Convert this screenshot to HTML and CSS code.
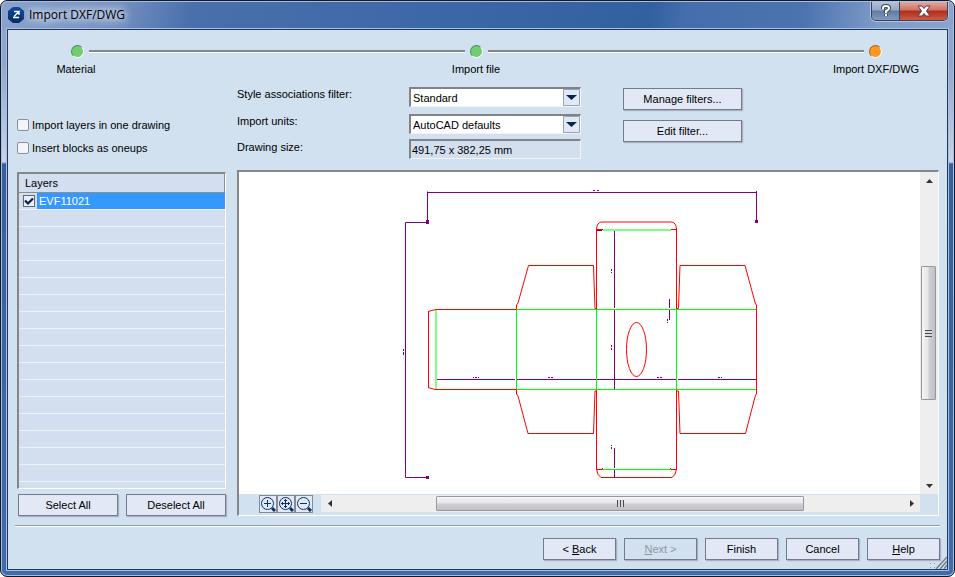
FILE: index.html
```html
<!DOCTYPE html>
<html lang="en">
  <head>
    <meta charset="UTF-8" />
    <meta name="viewport" content="width=device-width, initial-scale=1.0" />
    <title>Import DXF/DWG</title>
    <link rel="stylesheet" href="styles.css">
  </head>
  <body>
    <div class="window">
      <header class="titlebar">
        <svg class="app-icon" viewBox="0 0 16 16" width="16" height="16">
          <defs>
            <linearGradient id="icon-fill" x1="0" y1="0" x2="0" y2="1">
              <stop offset="0" stop-color="#0a4aa0" />
              <stop offset="1" stop-color="#052a66" />
            </linearGradient>
          </defs>
          <path d="M5 0h6l5 4v8l-5 4H5l-5-4V4z" fill="url(#icon-fill)" />
          <path d="M6 4.500h5L6 9.500M11 4v4M5 10.500h6" fill="none" stroke="#fff" stroke-width="1.300" />
        </svg>
        <h1>Import DXF/DWG</h1>
        <div class="window-controls">
          <button type="button" class="help-btn" aria-label="Help">
            <svg viewBox="0 0 12 14" width="12" height="14">
              <path d="M3 5V4q0-2 3-2t3 2q0 2-3 3v2M6 10v2" fill="none" stroke="#3c4656" stroke-width="4" />
              <path d="M3 5V4q0-2 3-2t3 2q0 2-3 3v2M6 10v2" fill="none" stroke="#fff" stroke-width="2" />
            </svg>
          </button>
          <button type="button" class="close-btn" aria-label="Close">
            <svg viewBox="0 0 14 12" width="14" height="12">
              <path d="M1 1h4l2 2.500L9 1h4L9.500 6l3.500 5H9L7 8.500 5 11H1l3.500-5z" fill="#fff" stroke="#5b3a42" />
            </svg>
          </button>
        </div>
      </header>

      <main class="client">
        <section class="wizard-steps">
          <div class="step-track">
            <span class="dot done"></span>
            <span class="line"></span>
            <span class="dot done"></span>
            <span class="line"></span>
            <span class="dot current"></span>
          </div>
          <ol class="step-labels">
            <li>Material</li>
            <li>Import file</li>
            <li>Import DXF/DWG</li>
          </ol>
        </section>

        <div class="content">
          <div class="options">
            <label><input type="checkbox" />Import layers in one drawing</label>
            <label><input type="checkbox" />Insert blocks as oneups</label>
          </div>

          <form class="settings">
            <div class="fields">
              <label for="style-filter">Style associations filter:</label>
              <select id="style-filter">
                <option>Standard</option>
              </select>
              <label for="units">Import units:</label>
              <select id="units">
                <option>AutoCAD defaults</option>
              </select>
              <label for="size">Drawing size:</label>
              <input type="text" id="size" value="491,75 x 382,25 mm" readonly />
            </div>
            <div class="filter-buttons">
              <button type="button" class="btn">Manage filters...</button>
              <button type="button" class="btn">Edit filter...</button>
            </div>
          </form>

          <section class="layers">
            <div class="layer-list">
              <table>
                <thead>
                  <tr><th colspan="2">Layers</th></tr>
                </thead>
                <tbody>
                  <tr>
                    <td class="check"><input type="checkbox" id="layer-1" checked /></td>
                    <td class="name"><label for="layer-1">EVF11021</label></td>
                  </tr>
                </tbody>
              </table>
            </div>
            <div class="layer-buttons">
              <button type="button" class="btn">Select All</button>
              <button type="button" class="btn">Deselect All</button>
            </div>
          </section>

          <section class="preview">
            <div class="canvas">
              <svg viewBox="239 172 681 322" fill="none">
                <!-- dimension lines -->
                <g stroke="#800080">
                  <path d="M427.500 221V191.500M427 192.500H756.500M756.500 191V221" />
                  <path d="M428 222.500H405.500V477.500H428" />
                  <path d="M614.500 231V308M614.500 310V389M614.500 448V468M614.500 470V477" />
                  <path d="M437 379.500H515M517 379.500H676M678 379.500H756" />
                  <path d="M669.500 299V308M669.500 310V320" />
                  <path d="M593 190.500h2m2 0h2M473 377.500h1m1 0h2m1 0h1M548 377.500h2m1 0h2M657 377.500h2m1 0h2M718 377.500h2m1 0h1" />
                  <path d="M611.500 269v2m0 1v1M611.500 345v2m0 1v2M403.500 349v2m0 1v3M667.500 319v2m0 1v1M611.500 445v1m0 1v2" />
                </g>
                <g fill="#800080">
                  <rect x="426" y="220" width="3" height="4" />
                  <rect x="755" y="220" width="3" height="3" />
                  <rect x="426" y="476" width="3" height="3" />
                </g>
                <!-- cut lines -->
                <g stroke="#ff0000">
                  <path d="M516.500 309.500H436L428 311.500" />
                  <path d="M428 387.500L435 389.500H516.500" />
                  <path d="M428.500 311V388" />
                  <path d="M516.500 309.500V305L518 303L528.500 265.500H593.500L595 308.500H596.500" />
                  <path d="M516.500 389.500V394L518 396L528 433.500H593.500L595 391H596.500" />
                  <path d="M596.500 309V229Q597 223 601 222H672Q676 223 676.500 229V309" />
                  <path d="M596.500 390V469Q597 475 601 477.500H672Q676 475 676.500 469V390" />
                  <path d="M596.500 229.500H603M671 229.500H676M596.500 469.500H602.500V468M676.500 469.500H670.500V468" />
                  <path d="M676.500 308.500H678.500L680 265.500H745L755.500 304L756.500 305V394L755.500 395L745.500 433.500H680L678.500 391H676.500" />
                  <ellipse cx="636.500" cy="349.500" rx="10" ry="27" />
                </g>
                <!-- crease lines -->
                <g stroke="#00ff00">
                  <path d="M517 309.500H756M517 389.500H756" />
                  <path d="M596.500 310V390M676.500 310V390" />
                  <path d="M603 469.500H671" />
                  <path d="M516.500 310V389" />
                </g>
                <g stroke="#80ff80">
                  <path d="M436 310V389" stroke-width="2" />
                  <path d="M603 230H671" stroke-width="2" />
                </g>
                <path d="M597 230.500H602" stroke="#800040" />
              </svg>
            </div>

            <div class="scrollbar vertical">
              <button type="button" aria-label="Scroll up"><svg viewBox="0 0 7 4" width="7" height="4"><path d="M3.500 0L7 4H0z" /></svg></button>
              <div class="track"><div class="thumb"><i class="grip"></i></div></div>
              <button type="button" aria-label="Scroll down"><svg viewBox="0 0 7 4" width="7" height="4"><path d="M0 0h7L3.500 4z" /></svg></button>
            </div>

            <div class="preview-bar">
              <div class="zoom-tools">
                <button type="button" aria-label="Zoom in">
                  <svg viewBox="0 0 16 16" width="16" height="16">
                    <circle cx="7.500" cy="7.500" r="6" /><path d="M4 7.500h7M7.500 4v7" /><path class="handle" d="M12 12l3 3" />
                  </svg>
                </button>
                <button type="button" aria-label="Zoom to fit">
                  <svg viewBox="0 0 16 16" width="16" height="16">
                    <circle cx="7.500" cy="7.500" r="6" /><path d="M3 7.500h9M7.500 3v9M4.500 6v3M10.500 6v3M6 4.500h3M6 10.500h3" /><path class="handle" d="M12 12l3 3" />
                  </svg>
                </button>
                <button type="button" aria-label="Zoom out">
                  <svg viewBox="0 0 16 16" width="16" height="16">
                    <circle cx="7.500" cy="7.500" r="6" /><path d="M4 7.500h7" /><path class="handle" d="M12 12l3 3" />
                  </svg>
                </button>
              </div>
              <div class="scrollbar horizontal">
                <button type="button" aria-label="Scroll left"><svg viewBox="0 0 4 7" width="4" height="7"><path d="M4 0v7L0 3.500z" /></svg></button>
                <div class="track"><div class="thumb"><i class="grip"></i></div></div>
                <button type="button" aria-label="Scroll right"><svg viewBox="0 0 4 7" width="4" height="7"><path d="M0 0v7l4-3.500z" /></svg></button>
              </div>
            </div>
          </section>
        </div>

        <footer class="actions">
          <button type="button" class="btn">&lt; <u>B</u>ack</button>
          <button type="button" class="btn" disabled><u>N</u>ext &gt;</button>
          <button type="button" class="btn">Finish</button>
          <button type="button" class="btn">Cancel</button>
          <button type="button" class="btn"><u>H</u>elp</button>
        </footer>
        <svg class="resize-grip" viewBox="0 0 18 16" width="18" height="16">
          <path d="M7 16L18 4M11 16l7-8M15 16l3-4" stroke="#6f7f90" stroke-width="1.500" />
          <path d="M1 10.500h1m3 0h1M1 14.500h1m3 0h1" stroke="#8a99aa" />
        </svg>
      </main>
    </div>
  </body>
</html>
```
FILE: styles.css
```css
* {
  margin: 0;
  padding: 0;
  box-sizing: border-box;
}

body {
  font-family: "Liberation Sans", Arial, sans-serif;
  font-size: 11px;
  line-height: 14px;
  color: #000;
  background-color: #fff;
}

button,
input,
select {
  font: inherit;
  color: inherit;
}

/* window frame */
.window {
  display: flex;
  flex-direction: column;
  min-height: 100vh;
  padding: 0 6px 6px;
  border: 1px solid #10182c;
  border-radius: 7px;
  background: linear-gradient(#8ea5cd 0, #8ea5cd 60px, #c9d4e8 161px, #365f9e 163px, #3f6cad 100%);
  box-shadow: inset 0 0 0 1px #a9bddd;
}

.titlebar {
  display: flex;
  align-items: center;
  height: 28px;
  margin: 0 -5px;
  padding: 0 5px 2px 6px;
  border-top: 1px solid #a9bddd;
  border-radius: 6px 6px 0 0;
  background: linear-gradient(100deg, #8ba3cc 0, #7591c1 12%, #4970ac 20%, #3d68a7 45%, #33609f 68%, #456fac 72%, #4a73af 84%, #7f9ac8 92%, #8ba4cf 100%);
}

.titlebar h1 {
  flex: 1;
  padding-left: 5px;
  font-family: "Open Sans", sans-serif;
  font-size: 12px;
  font-weight: normal;
  line-height: 18px;
  text-shadow: 0 0 6px #dfe8f6, 0 0 8px #dfe8f6, 0 0 12px #dfe8f6;
}

.window-controls {
  display: flex;
  align-self: flex-start;
  height: 19px;
  border: 1px solid #39425a;
  border-top: none;
  border-radius: 0 0 5px 5px;
  overflow: hidden;
  box-shadow: 0 0 0 1px #b3c4e0;
}

.window-controls button {
  display: flex;
  align-items: center;
  justify-content: center;
  border: none;
}

.window-controls .help-btn {
  width: 28px;
  border-right: 1px solid #39425a;
  background: linear-gradient(#b4c2da, #93a7c8 45%, #60799f 50%, #829ac0);
}

.window-controls .close-btn {
  width: 47px;
  background: linear-gradient(#e2aba2, #cf7263 45%, #b02c1b 50%, #cb5c46);
}

.client {
  position: relative;
  display: flex;
  flex: 1;
  flex-direction: column;
  border: 1px solid #22375a;
  background-color: #d1e1ef;
  box-shadow: 0 0 0 1px #a8c0e0;
}

/* wizard progress */
.step-track {
  display: flex;
  align-items: center;
  gap: 5px;
  padding: 15px 65px 0 63px;
}

.dot {
  width: 13px;
  height: 13px;
  border: 1px solid #58866a;
  border-right-color: #fff;
  border-bottom-color: #fff;
  border-radius: 50%;
}

.done {
  background-color: #6fce70;
}

.current {
  border-color: #9b6a32 #fff #fff #9b6a32;
  background-color: #ff981f;
}

.line {
  flex: 1;
  height: 3px;
  border-top: 2px solid #83878d;
  border-bottom: 1px solid #fff;
}

.step-labels {
  display: flex;
  justify-content: space-between;
  padding: 4px 21px 0 18px;
  list-style: none;
}

.step-labels li {
  width: 100px;
  text-align: center;
}

/* main grid */
.content {
  display: grid;
  flex: 1;
  grid-template-columns: 210px 1fr;
  grid-template-rows: 83px 1fr;
  column-gap: 10px;
  margin-top: 11px;
  padding: 0 8px 0 9px;
}

.options {
  display: flex;
  flex-direction: column;
  gap: 9px;
  padding-top: 31px;
}

.options label {
  display: flex;
  align-items: center;
  gap: 3px;
}

input[type="checkbox"] {
  width: 12px;
  height: 12px;
  border: 1px solid #8a919c;
  border-radius: 2px;
  background-color: #f4f5f8;
  appearance: none;
}

.settings {
  display: flex;
  align-items: flex-start;
  gap: 42px;
}

.fields {
  display: grid;
  grid-template-columns: 172px 172px;
  grid-template-rows: 20px 19px 20px;
  row-gap: 7px;
}

.fields select,
.fields input {
  width: 100%;
  height: 20px;
  border: 2px solid;
  border-color: #808285 #f2f4f6 #f2f4f6 #808285;
  border-right-width: 1px;
  border-bottom-width: 1px;
  border-radius: 0;
  outline: none;
}

.fields select {
  padding-left: 2px;
  background: #fff url("data:image/svg+xml,%3Csvg xmlns='http://www.w3.org/2000/svg' width='17' height='17'%3E%3Cpath d='M.5.5h16v16H.5z' fill='%23e2e8f5' stroke='%2392a5be'/%3E%3Cpath d='M3 6h11l-5.500 5z' fill='%23042350'/%3E%3C/svg%3E") no-repeat right center;
  appearance: none;
}

.fields input {
  margin-top: -1px;
  padding-left: 1px;
  background-color: #d3dfef;
}

.filter-buttons {
  display: flex;
  flex-direction: column;
  gap: 10px;
  width: 119px;
  padding-top: 1px;
}

.btn {
  height: 22px;
  border: 1px solid #77798c;
  background-color: #e2e8f5;
  box-shadow: 1px 1px 1px #a7b3c3;
}

.btn:disabled {
  color: #8e96a3;
  background-color: #d1e1ef;
}

/* layer list */
.layers {
  display: flex;
  flex-direction: column;
  gap: 5px;
  padding: 2px 1px 0 0;
}

.layer-list {
  flex: 1;
  border: 2px solid;
  border-color: #85878b #fff #fff #85878b;
  border-right-width: 1px;
  border-bottom-width: 1px;
  background: repeating-linear-gradient(#d3dfef 0, #d3dfef 16px, #eff3f8 16px, #eff3f8 17px) 0 2px;
}

.layer-list table {
  width: 100%;
  border-collapse: collapse;
}

.layer-list th {
  height: 18px;
  padding-left: 6px;
  border-right: 1px solid #8b8e93;
  border-bottom: 1px solid #8b8e93;
  font-weight: normal;
  text-align: left;
  background-color: #d3dfef;
}

.layer-list td {
  height: 17px;
}

.layer-list .check {
  width: 18px;
  padding-left: 4px;
}

.layer-list .check input {
  display: block;
  border-color: #5d6b80;
  border-radius: 0;
  background: #e9eef7 url("data:image/svg+xml,%3Csvg xmlns='http://www.w3.org/2000/svg' width='10' height='10'%3E%3Cpath d='M1 4.500l3 3 5-5' fill='none' stroke='%23042350' stroke-width='2.200'/%3E%3C/svg%3E") center no-repeat;
}

.layer-list .name {
  padding-left: 2px;
  color: #fff;
  background-color: #3399ff;
}

.layer-buttons {
  display: grid;
  grid-template-columns: 1fr 1fr;
  gap: 8px;
  padding-left: 1px;
}

/* drawing preview */
.preview {
  display: grid;
  grid-template-columns: 1fr 18px;
  grid-template-rows: 1fr 21px;
  min-height: 0;
  border: 2px solid;
  border-color: #85878b #fff #fff #85878b;
  border-right-width: 1px;
  border-bottom-width: 1px;
}

.canvas {
  min-height: 0;
  background-color: #fff;
}

.canvas svg {
  display: block;
  width: 100%;
  height: 100%;
}

.scrollbar {
  display: flex;
  background-color: #eeeeef;
}

.scrollbar button {
  display: flex;
  flex: 0 0 17px;
  align-items: center;
  justify-content: center;
  border: none;
  background: none;
}

.scrollbar svg {
  fill: #333;
}

.track {
  display: grid;
  flex: 1;
}

.thumb {
  display: flex;
  align-items: center;
  justify-content: center;
  border: 1px solid #96989c;
  border-radius: 1px;
}

.vertical {
  flex-direction: column;
}

.vertical .track {
  grid-template-rows: 77fr 134fr 77fr;
}

.vertical .thumb {
  grid-row: 2;
  width: 15px;
  margin-left: 1px;
  background: linear-gradient(90deg, #f5f5f6, #e5e5e8 45%, #cfcfd4 55%, #bfbfc6);
}

.vertical .grip {
  width: 7px;
  height: 7px;
  background: repeating-linear-gradient(#4c4c50 0, #4c4c50 1px, #d8d8db 1px, #d8d8db 3px);
}

.horizontal {
  flex: 1;
  height: 17px;
}

.horizontal .track {
  grid-template-columns: 98fr 368fr 99fr;
}

.horizontal .thumb {
  grid-column: 2;
  height: 15px;
  margin-top: 1px;
  background: linear-gradient(#f5f5f6, #e5e5e8 45%, #cfcfd4 55%, #bfbfc6);
}

.horizontal .grip {
  width: 7px;
  height: 7px;
  background: repeating-linear-gradient(90deg, #4c4c50 0, #4c4c50 1px, #d8d8db 1px, #d8d8db 3px);
}

.preview-bar {
  display: flex;
  align-items: flex-start;
  padding-top: 1px;
}

.zoom-tools {
  display: flex;
  padding: 0 8px 0 20px;
}

.zoom-tools button {
  width: 18px;
  height: 18px;
  border: 1px solid #85899a;
  background-color: #e2e8f5;
}

.zoom-tools svg {
  display: block;
  fill: none;
  stroke: #0b3262;
}

.zoom-tools .handle {
  stroke-width: 3;
}

/* footer */
.actions {
  display: flex;
  justify-content: flex-end;
  gap: 8px;
  margin: 9px 7px 0 7px;
  padding: 12px 0 9px;
  border-top: 1px solid #8f98a3;
  box-shadow: inset 0 1px 0 #fff;
}

.actions .btn {
  width: 73px;
}

.resize-grip {
  position: absolute;
  right: 0;
  bottom: 0;
}
```
